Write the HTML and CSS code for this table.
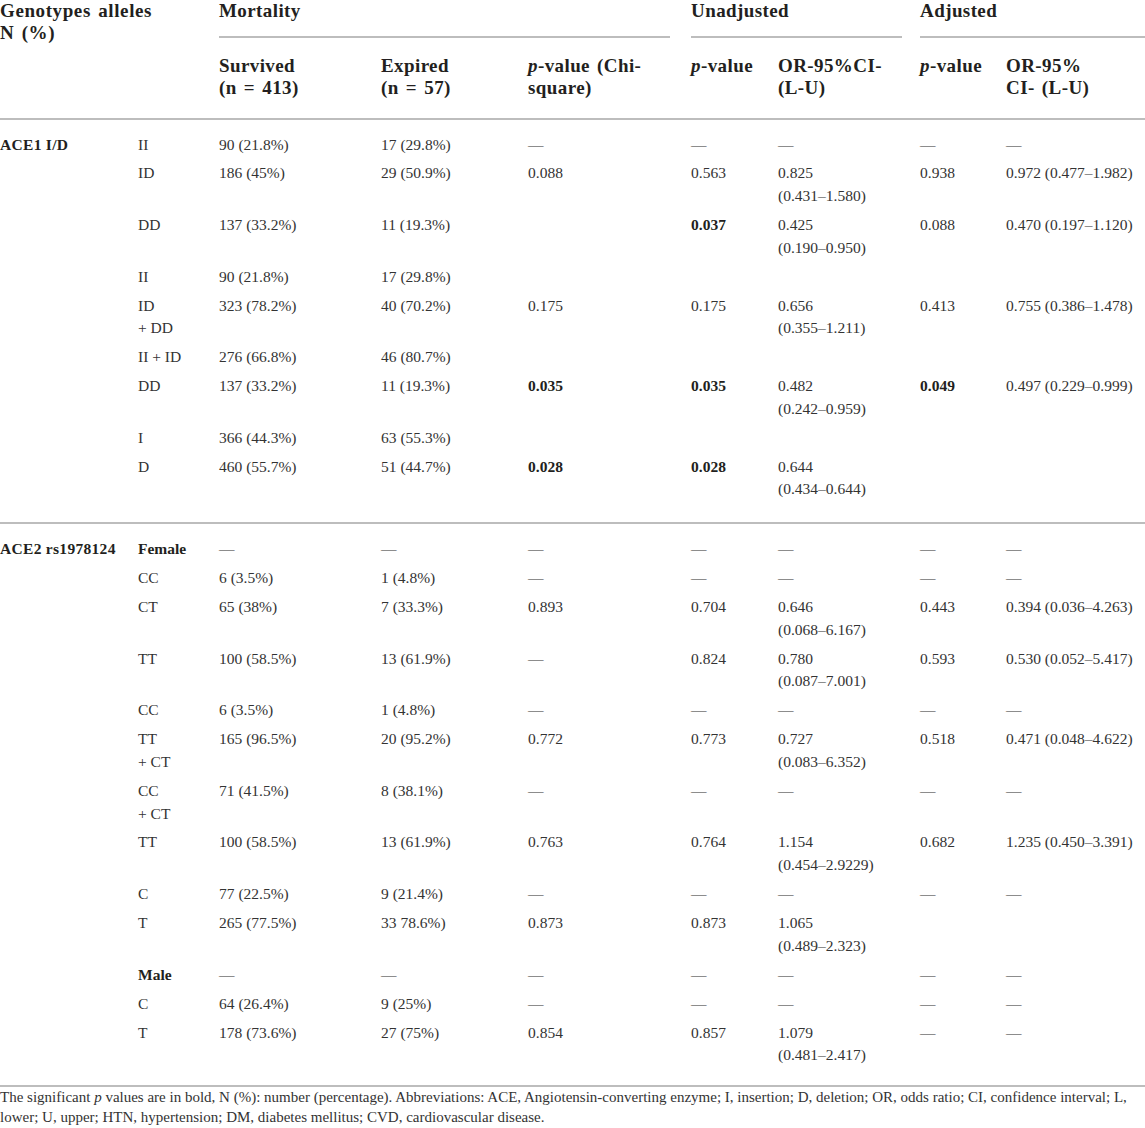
FILE: index.html
```html
<!DOCTYPE html>
<html>
<head>
<meta charset="utf-8">
<link rel="stylesheet" href="styles.css">
</head>
<body>
<table class="tbl">
  <colgroup>
    <col class="c1"><col class="c2"><col class="c3"><col class="c4"><col class="c5"><col class="c6"><col class="c7"><col class="c8"><col class="c9">
  </colgroup>
  <thead>
    <tr class="h1">
      <th colspan="2" rowspan="2" class="hmain">Genotypes alleles<br>N (%)</th>
      <th colspan="3"><div class="grp g-mort">Mortality</div></th>
      <th colspan="2"><div class="grp g-unadj">Unadjusted</div></th>
      <th colspan="2"><div class="grp g-adj">Adjusted</div></th>
    </tr>
    <tr class="h2">
      <th>Survived<br>(n = 413)</th>
      <th>Expired<br>(n = 57)</th>
      <th><i>p</i>-value (Chi-<br>square)</th>
      <th><i>p</i>-value</th>
      <th>OR-95%CI-<br>(L-U)</th>
      <th><i>p</i>-value</th>
      <th>OR-95%<br>CI- (L-U)</th>
    </tr>
  </thead>
  <tbody class="sec">
    <tr><td class="lbl">ACE1 I/D</td><td>II</td><td>90 (21.8%)</td><td>17 (29.8%)</td><td>—</td><td>—</td><td>—</td><td>—</td><td>—</td></tr>
    <tr><td></td><td>ID</td><td>186 (45%)</td><td>29 (50.9%)</td><td>0.088</td><td>0.563</td><td>0.825<br>(0.431–1.580)</td><td>0.938</td><td>0.972 (0.477–1.982)</td></tr>
    <tr><td></td><td>DD</td><td>137 (33.2%)</td><td>11 (19.3%)</td><td></td><td class="b">0.037</td><td>0.425<br>(0.190–0.950)</td><td>0.088</td><td>0.470 (0.197–1.120)</td></tr>
    <tr><td></td><td>II</td><td>90 (21.8%)</td><td>17 (29.8%)</td><td></td><td></td><td></td><td></td><td></td></tr>
    <tr><td></td><td>ID<br>+ DD</td><td>323 (78.2%)</td><td>40 (70.2%)</td><td>0.175</td><td>0.175</td><td>0.656<br>(0.355–1.211)</td><td>0.413</td><td>0.755 (0.386–1.478)</td></tr>
    <tr><td></td><td>II + ID</td><td>276 (66.8%)</td><td>46 (80.7%)</td><td></td><td></td><td></td><td></td><td></td></tr>
    <tr><td></td><td>DD</td><td>137 (33.2%)</td><td>11 (19.3%)</td><td class="b">0.035</td><td class="b">0.035</td><td>0.482<br>(0.242–0.959)</td><td class="b">0.049</td><td>0.497 (0.229–0.999)</td></tr>
    <tr><td></td><td>I</td><td>366 (44.3%)</td><td>63 (55.3%)</td><td></td><td></td><td></td><td></td><td></td></tr>
    <tr><td></td><td>D</td><td>460 (55.7%)</td><td>51 (44.7%)</td><td class="b">0.028</td><td class="b">0.028</td><td>0.644<br>(0.434–0.644)</td><td></td><td></td></tr>
  </tbody>
  <tbody class="sec">
    <tr><td class="lbl">ACE2 rs1978124</td><td class="b">Female</td><td>—</td><td>—</td><td>—</td><td>—</td><td>—</td><td>—</td><td>—</td></tr>
    <tr><td></td><td>CC</td><td>6 (3.5%)</td><td>1 (4.8%)</td><td>—</td><td>—</td><td>—</td><td>—</td><td>—</td></tr>
    <tr><td></td><td>CT</td><td>65 (38%)</td><td>7 (33.3%)</td><td>0.893</td><td>0.704</td><td>0.646<br>(0.068–6.167)</td><td>0.443</td><td>0.394 (0.036–4.263)</td></tr>
    <tr><td></td><td>TT</td><td>100 (58.5%)</td><td>13 (61.9%)</td><td>—</td><td>0.824</td><td>0.780<br>(0.087–7.001)</td><td>0.593</td><td>0.530 (0.052–5.417)</td></tr>
    <tr><td></td><td>CC</td><td>6 (3.5%)</td><td>1 (4.8%)</td><td>—</td><td>—</td><td>—</td><td>—</td><td>—</td></tr>
    <tr><td></td><td>TT<br>+ CT</td><td>165 (96.5%)</td><td>20 (95.2%)</td><td>0.772</td><td>0.773</td><td>0.727<br>(0.083–6.352)</td><td>0.518</td><td>0.471 (0.048–4.622)</td></tr>
    <tr><td></td><td>CC<br>+ CT</td><td>71 (41.5%)</td><td>8 (38.1%)</td><td>—</td><td>—</td><td>—</td><td>—</td><td>—</td></tr>
    <tr><td></td><td>TT</td><td>100 (58.5%)</td><td>13 (61.9%)</td><td>0.763</td><td>0.764</td><td>1.154<br>(0.454–2.9229)</td><td>0.682</td><td>1.235 (0.450–3.391)</td></tr>
    <tr><td></td><td>C</td><td>77 (22.5%)</td><td>9 (21.4%)</td><td>—</td><td>—</td><td>—</td><td>—</td><td>—</td></tr>
    <tr><td></td><td>T</td><td>265 (77.5%)</td><td>33 78.6%)</td><td>0.873</td><td>0.873</td><td>1.065<br>(0.489–2.323)</td><td></td><td></td></tr>
    <tr><td></td><td class="b">Male</td><td>—</td><td>—</td><td>—</td><td>—</td><td>—</td><td>—</td><td>—</td></tr>
    <tr><td></td><td>C</td><td>64 (26.4%)</td><td>9 (25%)</td><td>—</td><td>—</td><td>—</td><td>—</td><td>—</td></tr>
    <tr><td></td><td>T</td><td>178 (73.6%)</td><td>27 (75%)</td><td>0.854</td><td>0.857</td><td>1.079<br>(0.481–2.417)</td><td>—</td><td>—</td></tr>
  </tbody>
</table>
<p class="note">The significant <i>p</i> values are in bold, N (%): number (percentage). Abbreviations: ACE, Angiotensin-converting enzyme; I, insertion; D, deletion; OR, odds ratio; CI, confidence interval; L,<br>lower; U, upper; HTN, hypertension; DM, diabetes mellitus; CVD, cardiovascular disease.</p>
</body>
</html>
```

FILE: styles.css
```css
html, body {
  margin: 0;
  padding: 0;
  background: #fff;
}
body {
  font-family: "Liberation Serif", "Times New Roman", serif;
  color: #333;
  width: 1145px;
}
.tbl {
  width: 1145px;
  table-layout: fixed;
  border-collapse: collapse;
  border-spacing: 0;
}
.c1 { width: 138px; }
.c2 { width: 81px; }
.c3 { width: 162px; }
.c4 { width: 147px; }
.c5 { width: 163px; }
.c6 { width: 87px; }
.c7 { width: 142px; }
.c8 { width: 86px; }
.c9 { width: 139px; }

th {
  text-align: left;
  vertical-align: top;
  font-size: 19px;
  font-weight: bold;
  color: #231f20;
  letter-spacing: 0.4px;
  word-spacing: 2px;
  padding: 0;
}
th i { font-style: italic; }
.h1 th {
  line-height: 22px;
  padding-top: 0;
}
.hmain {
  letter-spacing: 0.6px;
}
.grp {
  padding-bottom: 14px;
  border-bottom: 2px solid #bdbdbd;
}
.g-mort { margin-right: 21px; }
.g-unadj { margin-right: 18px; }
.g-adj { margin-right: 0; }
.h2 th {
  line-height: 22px;
  padding-top: 17px;
  padding-bottom: 19px;
}
thead {
  border-bottom: 2px solid #bdbdbd;
}
td {
  font-size: 15.5px;
  line-height: 22.6px;
  padding: 3.2px 0;
  vertical-align: top;
  text-align: left;
  color: #333;
  white-space: nowrap;
}
td.b, td.lbl {
  font-weight: bold;
  color: #231f20;
}
.lbl {
  letter-spacing: 0.3px;
}
.sec {
  border-bottom: 2px solid #bdbdbd;
}
.sec tr:first-child td {
  padding-top: 13.5px;
}
.sec + .sec tr:first-child td {
  padding-top: 14.5px;
}
.sec tr:last-child td {
  padding-bottom: 21px;
}
.sec + .sec tr:last-child td {
  padding-bottom: 18.5px;
}
.note {
  margin: 0;
  padding-top: 0;
  font-size: 15px;
  line-height: 20px;
  color: #333;
  white-space: nowrap;
}
```
